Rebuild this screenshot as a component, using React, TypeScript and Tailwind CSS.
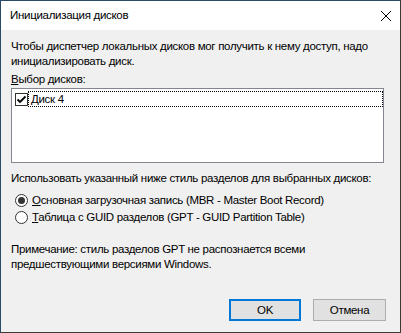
import React from "react";

const font = {
  fontFamily: '"Liberation Sans", Arial, sans-serif',
  letterSpacing: "-0.3px",
};

function CheckBox() {
  return (
    <div className="w-[13px] h-[13px] border border-[#333333] bg-white flex items-center justify-center shrink-0">
      <svg width="11" height="11" viewBox="0 0 11 11">
        <path d="M1.5 5.5 L4 8 L9.5 2.5" fill="none" stroke="#000" strokeWidth="1.8" />
      </svg>
    </div>
  );
}

function Radio({ checked }: { checked?: boolean }) {
  return (
    <div className="w-[13px] h-[13px] rounded-full border border-[#333333] bg-white flex items-center justify-center shrink-0">
      {checked && <div className="w-[7px] h-[7px] rounded-full bg-[#333333]" />}
    </div>
  );
}

export default function App() {
  return (
    <div
      className="w-[401px] h-[333px] bg-[#f0f0f0] border border-t-[#2b4a66] border-l-[#2b4a66] border-r-[#3a3934] border-b-[#3a3934] flex flex-col text-[11.5px] leading-[15px] text-black"
      style={font}
    >
      <div className="h-[29px] bg-white flex items-center justify-between pl-[9px] pr-[8px] shrink-0">
        <span>Инициализация дисков</span>
        <svg width="12" height="12" viewBox="0 0 12 12">
          <path d="M1 1 L11 11 M11 1 L1 11" stroke="#000" strokeWidth="1" />
        </svg>
      </div>
      <div className="flex flex-col pl-[10px] pt-[9px]">
        <div className="whitespace-nowrap">
          Чтобы диспетчер локальных дисков мог получить к нему доступ, надо
          <br />
          инициализировать диск.
        </div>
        <div className="mt-[3px]">
          <span className="underline">В</span>ыбор дисков:
        </div>
        <div className="mt-[1px] w-[373px] h-[75px] bg-white border border-[#828790] pt-[2px] pl-[2px]">
          <div className="flex items-center h-[16px] w-[369px]">
            <div className="w-[15px] flex justify-start pl-[1px]">
              <CheckBox />
            </div>
            <div className="flex-1 h-[16px] border border-dotted border-black flex items-center pl-[2px] ml-[-1px]">
              Диск 4
            </div>
          </div>
        </div>
        <div className="mt-[8px] whitespace-nowrap">
          Использовать указанный ниже стиль разделов для выбранных дисков:
        </div>
        <div className="mt-[6px] flex items-center h-[17px] pl-[4px] gap-[4px] whitespace-nowrap">
          <Radio checked />
          <span>
            <span className="underline">О</span>сновная загрузочная запись (MBR - Master Boot Record)
          </span>
        </div>
        <div className="flex items-center h-[17px] pl-[4px] gap-[4px] whitespace-nowrap">
          <Radio />
          <span>
            <span className="underline">Т</span>аблица с GUID разделов (GPT - GUID Partition Table)
          </span>
        </div>
        <div className="mt-[16px] whitespace-nowrap">
          Примечание: стиль разделов GPT не распознается всеми
          <br />
          предшествующими версиями Windows.
        </div>
      </div>
      <div className="mt-auto flex justify-end gap-[12px] pr-[14px] pb-[11px]">
        <button className="w-[72px] h-[22px] bg-[#e1e1e1] border-2 border-[#0078d7] flex items-center justify-center">
          OK
        </button>
        <button className="w-[73px] h-[22px] bg-[#e1e1e1] border border-[#adadad] flex items-center justify-center">
          Отмена
        </button>
      </div>
    </div>
  );
}
